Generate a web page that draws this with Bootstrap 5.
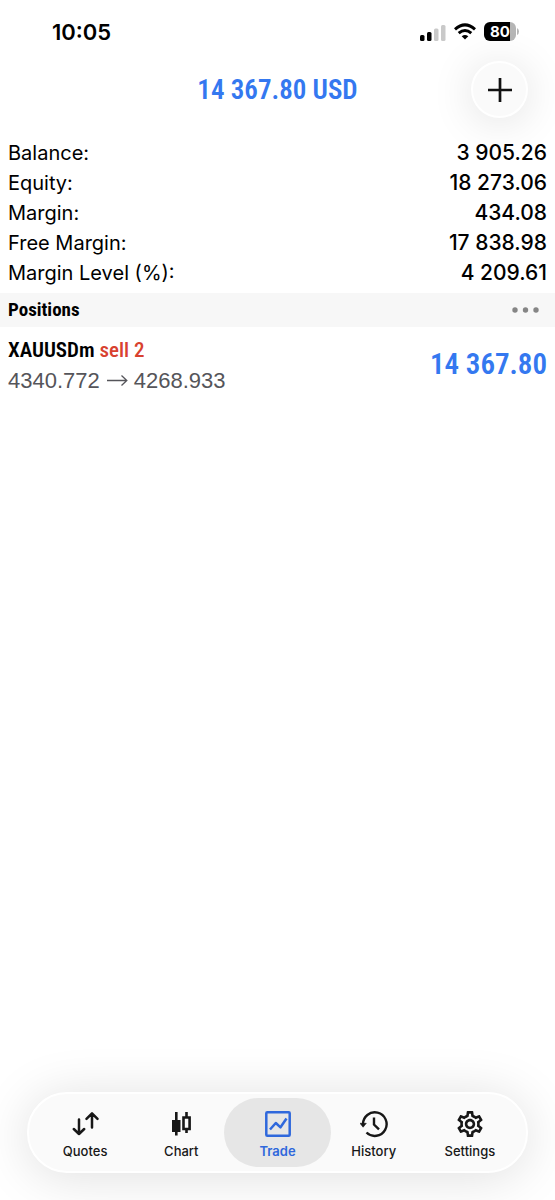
<!DOCTYPE html>
<html lang="en">
<head>
<meta charset="utf-8">
<meta name="viewport" content="width=device-width, initial-scale=1">
<title>Trade</title>
<link href="https://cdn.jsdelivr.net/npm/bootstrap@5.3.0/dist/css/bootstrap.min.css" rel="stylesheet">
<style>
  body { font-family: Inter, "Liberation Sans", sans-serif; color: #000; background: #fff; }
  .narrow { font-family: "Roboto Condensed", "Liberation Sans Narrow", "Liberation Sans", sans-serif; font-weight: 600; }
  .profit { color: #3478f0; }
  .status-bar { height: 61px; padding: 2px 36px 0 52px; }
  .clock { font-size: 22px; font-weight: 600; line-height: 28px; }
  .battery { width: 35px; height: 20px; }
  .battery-level { width: 32px; height: 19px; border-radius: 6px; font-size: 15px; line-height: 19px; font-weight: 700; color: #fff; padding-left: 6px; background: linear-gradient(90deg, #000 80%, #b5b5b5 80%); }
  .page-head { height: 57px; margin-bottom: 20px; }
  .page-title { font-size: 27px; line-height: 32px; }
  .add-btn { top: 0; right: 27px; width: 57px; height: 57px; border-radius: 50%; border: 2px solid #fff; background: #fafafa; box-shadow: 0 4px 44px rgba(0,0,0,.12); }
  .summary-row { font-size: 20px; line-height: 30px; padding: 0 8px; }
  .summary-row dd { font-size: 21px; font-weight: 500; }
  .section-head { height: 34px; background: #f7f7f7; margin-top: 5px; padding: 0 8px; }
  .section-head h2 { font-size: 19px; line-height: 34px; font-weight: 700; }
  .more-btn { padding: 0 8px; }
  .position { padding: 8px; }
  .symbol { font-size: 21px; line-height: 30px; }
  .sell { color: #d8412f; font-weight: 500; }
  .prices { font-family: "Liberation Sans", sans-serif; font-size: 22px; line-height: 32px; color: #55555a; }
  .prices svg { margin: 0 6px; }
  .amount { font-size: 29px; line-height: 34px; padding-bottom: 4px; }
  .tab-bar { margin: 0 27px 27px; padding: 4px 8px; border-radius: 40px; border: 2px solid #fff; background: #fafafa; box-shadow: 0 4px 52px rgba(0,0,0,.13); }
  .tab { height: 69px; padding-top: 12px; color: #171717; font-size: 13px; line-height: 18px; font-weight: 500; }
  .tab svg { margin-bottom: 4px; }
  .tab > * { position: relative; }
  .tab.active { color: #2f68dc; font-weight: 600; }
  .tab.active::before { content: ""; position: absolute; inset: 0 -5px; border-radius: 35px; background: #e6e6e6; }
</style>
</head>
<body class="d-flex flex-column min-vh-100">
<header>
  <div class="status-bar d-flex justify-content-between align-items-center">
    <time class="clock">10:05</time>
    <div class="d-flex align-items-center gap-2">
      <svg width="27" height="18" viewBox="0 0 27 18" aria-label="Signal"><rect x="1" y="12" width="4.500" height="6" rx="1.500"/><rect x="8" y="9" width="4.500" height="9" rx="1.500"/><rect x="15" y="5.500" width="4.500" height="12.500" rx="1.500" fill="#c9c9c9"/><rect x="22" y="2" width="4.500" height="16" rx="1.500" fill="#c9c9c9"/></svg>
      <svg width="22" height="18" viewBox="0 0 22 18" fill="none" stroke="#000" stroke-width="3" aria-label="Wi-Fi"><path d="M1 6.300Q11-2.500 21 6.300M4.700 10.200Q11 4.800 17.300 10.200"/><path d="M11 16.500 7.700 13.200Q11 10.600 14.300 13.200Z" fill="#000" stroke="none"/></svg>
      <div class="battery d-flex align-items-center"><span class="battery-level">80</span><svg width="3" height="7" viewBox="0 0 3 7"><path d="M1 0Q3 1 3 3.500T1 7Z" fill="#b5b5b5"/></svg></div>
    </div>
  </div>
  <div class="page-head position-relative d-flex justify-content-center align-items-center">
    <h1 class="page-title narrow profit m-0">14 367.80 USD</h1>
    <button type="button" class="add-btn position-absolute d-flex align-items-center justify-content-center p-0" aria-label="New order">
      <svg width="24" height="24" viewBox="0 0 24 24" stroke="#111" stroke-width="2.700"><path d="M12 0V24M0 12H24"/></svg>
    </button>
  </div>
</header>
<main class="flex-grow-1">
  <dl class="m-0">
    <div class="summary-row d-flex justify-content-between"><dt class="fw-normal">Balance:</dt><dd class="m-0">3 905.26</dd></div>
    <div class="summary-row d-flex justify-content-between"><dt class="fw-normal">Equity:</dt><dd class="m-0">18 273.06</dd></div>
    <div class="summary-row d-flex justify-content-between"><dt class="fw-normal">Margin:</dt><dd class="m-0">434.08</dd></div>
    <div class="summary-row d-flex justify-content-between"><dt class="fw-normal">Free Margin:</dt><dd class="m-0">17 838.98</dd></div>
    <div class="summary-row d-flex justify-content-between"><dt class="fw-normal">Margin Level (%):</dt><dd class="m-0">4 209.61</dd></div>
  </dl>
  <section>
    <div class="section-head d-flex justify-content-between align-items-center">
      <h2 class="narrow m-0">Positions</h2>
      <button type="button" class="more-btn border-0 bg-transparent d-flex" aria-label="More"><svg width="27" height="6" viewBox="0 0 27 6" fill="#858585"><circle cx="3" cy="3" r="2.700"/><circle cx="13.500" cy="3" r="2.700"/><circle cx="24" cy="3" r="2.700"/></svg></button>
    </div>
    <div class="position d-flex justify-content-between align-items-center">
      <div>
        <div class="symbol narrow">XAUUSDm <span class="sell">sell 2</span></div>
        <div class="prices d-flex align-items-center">4340.772<svg width="22" height="12" viewBox="0 0 22 12" fill="none" stroke="currentColor" stroke-width="1.300" aria-label="to"><path d="M1 5.500H20.500M15.500 .5 20.800 5.500 15.500 10.500"/></svg>4268.933</div>
      </div>
      <div class="amount narrow profit">14 367.80</div>
    </div>
  </section>
</main>
<nav class="tab-bar d-flex" aria-label="Sections">
  <a href="#" class="tab flex-fill w-100 position-relative d-flex flex-column align-items-center text-decoration-none">
    <svg width="28" height="28" viewBox="0 0 28 28" fill="none" stroke="currentColor" stroke-width="2.500" stroke-linecap="round" stroke-linejoin="round"><path d="M8 9.500V24M2.800 19 8 24 13.200 19M21 17.500V3.500M15.500 8.800 21 3.300 26.500 8.800"/></svg>
    <span>Quotes</span></a>
  <a href="#" class="tab flex-fill w-100 position-relative d-flex flex-column align-items-center text-decoration-none">
    <svg width="28" height="28" viewBox="0 0 28 28" fill="none" stroke="currentColor" stroke-width="2.600"><path d="M9.300 2V25.500M19.500 2V7.500M19.500 19V23"/><path d="M5 10H13.500V22H5Z" fill="currentColor" stroke="none"/><path d="M16.500 7.500H22.600V19H16.500Z"/></svg>
    <span>Chart</span></a>
  <a href="#" class="tab active flex-fill w-100 position-relative d-flex flex-column align-items-center text-decoration-none" aria-current="page">
    <svg width="28" height="28" viewBox="0 0 28 28" fill="none" stroke="currentColor" stroke-width="2.500" stroke-linejoin="round"><rect x="2.300" y="2.300" width="23.400" height="23.400" rx="1"/><path d="M6 19.500 11.800 13 16.500 17.300 22.500 8.500"/></svg>
    <span>Trade</span></a>
  <a href="#" class="tab flex-fill w-100 position-relative d-flex flex-column align-items-center text-decoration-none">
    <svg width="28" height="28" viewBox="0 0 28 28" fill="none" stroke="currentColor" stroke-width="2.400"><path d="M3 14.500A11.800 11.800 0 1 1 6.500 22.500"/><path d="M0 13.300H6.300L3.100 17.200Z" fill="currentColor" stroke="currentColor" stroke-width=".6"/><path d="M14 7.500V14.500L19 19.300"/></svg>
    <span>History</span></a>
  <a href="#" class="tab flex-fill w-100 position-relative d-flex flex-column align-items-center text-decoration-none">
    <svg width="28" height="28" viewBox="1.200 1.200 21.600 21.600" fill="currentColor"><path d="M19.430 12.980c.040-.320.070-.640.070-.980s-.030-.660-.070-.980l2.110-1.650c.190-.150.240-.420.120-.640l-2-3.460c-.120-.220-.390-.300-.610-.220l-2.490 1c-.520-.400-1.080-.730-1.690-.980l-.380-2.650C14.460 2.180 14.250 2 14 2h-4c-.250 0-.460.180-.490.420l-.380 2.650c-.610.250-1.170.590-1.690.980l-2.490-1c-.230-.090-.490 0-.610.220l-2 3.460c-.130.220-.070.490.120.640l2.110 1.650c-.040.320-.070.650-.070.980s.030.660.070.980l-2.110 1.650c-.190.150-.240.420-.120.640l2 3.460c.120.220.390.300.610.220l2.490-1c.520.400 1.080.730 1.690.980l.380 2.650c.030.240.240.420.490.420h4c.250 0 .460-.180.490-.420l.380-2.650c.610-.250 1.170-.590 1.690-.980l2.490 1c.230.090.490 0 .610-.220l2-3.460c.120-.220.070-.490-.120-.640zm-1.980-1.710c.040.310.050.520.050.730s-.020.430-.050.730l-.140 1.130.890.700 1.080.840-.700 1.210-1.270-.510-1.040-.420-.900.680c-.430.320-.840.560-1.250.730l-1.060.430-.160 1.130-.200 1.350h-1.400l-.190-1.350-.160-1.130-1.060-.430c-.430-.180-.830-.410-1.230-.710l-.910-.700-1.060.430-1.270.510-.700-1.210 1.080-.840.890-.700-.140-1.130c-.030-.310-.050-.540-.050-.740s.020-.430.050-.730l.140-1.130-.890-.700-1.080-.840.700-1.210 1.270.510 1.040.420.900-.680c.430-.320.840-.560 1.250-.730l1.060-.430.160-1.130.200-1.350h1.390l.190 1.350.160 1.130 1.060.430c.430.180.830.410 1.230.710l.910.700 1.060-.430 1.270-.510.700 1.210-1.070.850-.890.700zM12 8c-2.210 0-4 1.790-4 4s1.790 4 4 4 4-1.790 4-4-1.790-4-4-4m0 6c-1.100 0-2-.900-2-2s.900-2 2-2 2 .900 2 2-.900 2-2 2"/></svg>
    <span>Settings</span></a>
</nav>
<script src="https://cdn.jsdelivr.net/npm/bootstrap@5.3.0/dist/js/bootstrap.bundle.min.js"></script>
</body>
</html>
